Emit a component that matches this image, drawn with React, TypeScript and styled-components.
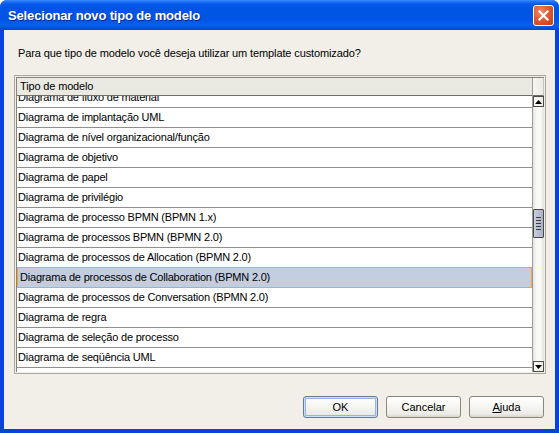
import React from "react";
import styled, { createGlobalStyle } from "styled-components";

const Global = createGlobalStyle`
  html, body { margin: 0; padding: 0; background: #ffffff; }
  body { font-family: "Liberation Sans", Arial, sans-serif; }
  #root { width: 559px; height: 433px; }
`;

const Window = styled.div`
  width: 559px;
  height: 433px;
  box-sizing: border-box;
  display: flex;
  flex-direction: column;
  border-radius: 7px 7px 0 0;
  background: #0842d8;
  overflow: hidden;
`;

const TitleBar = styled.div`
  height: 30px;
  flex: 0 0 30px;
  display: flex;
  align-items: center;
  justify-content: space-between;
  padding: 0 5px 0 8px;
  background: linear-gradient(
    to bottom,
    #3d8dfb 0px,
    #1c6ff6 2px,
    #0859ea 4px,
    #0054e3 9px,
    #0055e6 20px,
    #0a5ef0 25px,
    #0650df 28px,
    #0842d0 30px
  );
`;

const Title = styled.span`
  color: #ffffff;
  font-family: "Liberation Sans", Arial, sans-serif;
  font-weight: bold;
  font-size: 13px;
  letter-spacing: -0.15px;
  text-shadow: 1px 1px 0 #0a2a9a;
  margin-top: 1px;
`;

const CloseButton = styled.div`
  width: 21px;
  height: 21px;
  box-sizing: border-box;
  border: 1px solid #ffffff;
  border-radius: 3px;
  background: radial-gradient(circle at 35% 30%, #f08a66 0%, #e05a32 45%, #c63c14 100%);
  display: flex;
  align-items: center;
  justify-content: center;
  margin-top: 1px;
`;

const Body = styled.div`
  flex: 1;
  margin: 0 4px 4px 4px;
  background: #f1efe8;
  display: flex;
  flex-direction: column;
  padding: 16px 9px 0 10px;
`;

const Prompt = styled.div`
  font-size: 11px;
  letter-spacing: -0.12px;
  line-height: 14px;
  color: #000000;
  padding-left: 4px;
  height: 14px;
  margin-bottom: 15px;
`;

const Frame = styled.div`
  height: 299px;
  box-sizing: border-box;
  border: 1px solid #a9a79d;
  padding: 1px;
  display: flex;
`;

const Inner = styled.div`
  flex: 1;
  display: flex;
  border-left: 1px solid #858479;
  border-top: 1px solid #858479;
  background: #ffffff;
  min-width: 0;
`;

const ListColumn = styled.div`
  flex: 1;
  display: flex;
  flex-direction: column;
  min-width: 0;
`;

const Header = styled.div`
  height: 18px;
  box-sizing: border-box;
  background: #ebeae2;
  border-bottom: 1px solid #716f64;
  font-size: 11px;
  letter-spacing: -0.15px;
  line-height: 17px;
  padding-left: 3px;
  color: #000000;
`;

const Viewport = styled.div`
  flex: 1;
  overflow: hidden;
  background: #ffffff;
`;

const Rows = styled.div`
  margin-top: -8px;
  display: flex;
  flex-direction: column;
`;

const Row = styled.div<{ $selected?: boolean }>`
  height: ${(p) => (p.$selected ? "21px" : "20px")};
  margin-top: ${(p) => (p.$selected ? "-1px" : "0")};
  box-sizing: border-box;
  border-bottom: 1px solid #8f8f8b;
  ${(p) =>
    p.$selected
      ? `border: 1px solid #f2a23e; background: #c2cde2; padding-left: 2px;`
      : `padding-left: 1px;`}
  font-size: 11px;
  letter-spacing: -0.2px;
  line-height: 19px;
  color: #000000;
  white-space: nowrap;
`;

const ScrollBar = styled.div`
  width: 12px;
  box-sizing: border-box;
  border-left: 1px solid #9d9c96;
  display: flex;
  flex-direction: column;
  background: #f1efe8;
`;

const Corner = styled.div`
  height: 18px;
  flex: 0 0 18px;
  box-sizing: border-box;
  background: linear-gradient(to right, #f6f5f0, #ecebe4);
  border-bottom: 1px solid #716f64;
  border-right: 1px solid #c9c7bd;
`;

const ArrowButton = styled.div`
  height: 11px;
  flex: 0 0 11px;
  box-sizing: border-box;
  border: 1px solid #4d4c46;
  background: linear-gradient(to right, #ffffff, #eceae2);
  display: flex;
  align-items: center;
  justify-content: center;
`;

const Track = styled.div`
  flex: 1;
  background: linear-gradient(to right, #e4e3dc 0%, #fbfbf9 35%, #fbfbf9 65%, #e4e3dc 100%);
  display: flex;
  flex-direction: column;
`;

const Thumb = styled.div`
  margin-top: 102px;
  height: 29px;
  box-sizing: border-box;
  border: 1px solid #4a4944;
  border-radius: 1px;
  background: linear-gradient(to right, #c8cedd, #aab3c9);
  display: flex;
  flex-direction: column;
  align-items: center;
  justify-content: center;
  gap: 2px;
`;

const Grip = styled.div`
  width: 5px;
  height: 1px;
  background: #3c3b3e;
`;

const ButtonRow = styled.div`
  display: flex;
  justify-content: flex-end;
  gap: 8px;
  margin-top: 22px;
  padding-right: 2px;
`;

const Button = styled.div<{ $default?: boolean }>`
  width: 75px;
  height: 22px;
  box-sizing: border-box;
  border: 1px solid ${(p) => (p.$default ? "#6d7a8c" : "#8a8778")};
  border-radius: 3px;
  background: linear-gradient(to bottom, #ffffff 0%, #f7f7f4 40%, #ecebe6 85%, #d8d4ca 100%);
  ${(p) =>
    p.$default
      ? `box-shadow: inset 0 0 0 1px #cde0fa, inset 0 0 0 2px #94b4e8;`
      : ``}
  font-size: 11px;
  line-height: 20px;
  text-align: center;
  color: #000000;
`;

const Underline = styled.span`
  text-decoration: underline;
`;

const items = [
  "Diagrama de fluxo de material",
  "Diagrama de implantação UML",
  "Diagrama de nível organizacional/função",
  "Diagrama de objetivo",
  "Diagrama de papel",
  "Diagrama de privilégio",
  "Diagrama de processo BPMN (BPMN 1.x)",
  "Diagrama de processos BPMN (BPMN 2.0)",
  "Diagrama de processos de Allocation (BPMN 2.0)",
  "Diagrama de processos de Collaboration (BPMN 2.0)",
  "Diagrama de processos de Conversation (BPMN 2.0)",
  "Diagrama de regra",
  "Diagrama de seleção de processo",
  "Diagrama de seqüência UML",
  "Diagrama de sistema de informação",
];

export default function App() {
  return (
    <>
      <Global />
      <Window>
        <TitleBar>
          <Title>Selecionar novo tipo de modelo</Title>
          <CloseButton>
            <svg width="11" height="11" viewBox="0 0 11 11">
              <path d="M1.5 1.5 L9.5 9.5 M9.5 1.5 L1.5 9.5" stroke="#ffffff" strokeWidth="2.2" strokeLinecap="square" />
            </svg>
          </CloseButton>
        </TitleBar>
        <Body>
          <Prompt>Para que tipo de modelo você deseja utilizar um template customizado?</Prompt>
          <Frame>
            <Inner>
              <ListColumn>
                <Header>Tipo de modelo</Header>
                <Viewport>
                  <Rows>
                    {items.map((t, i) => (
                      <Row key={t} $selected={i === 9}>
                        {t}
                      </Row>
                    ))}
                  </Rows>
                </Viewport>
              </ListColumn>
              <ScrollBar>
                <Corner />
                <ArrowButton>
                  <svg width="7" height="4" viewBox="0 0 7 4">
                    <path d="M0 4 L3.5 0 L7 4 Z" fill="#000000" />
                  </svg>
                </ArrowButton>
                <Track>
                  <Thumb>
                    <Grip />
                    <Grip />
                    <Grip />
                    <Grip />
                    <Grip />
                  </Thumb>
                </Track>
                <ArrowButton>
                  <svg width="7" height="4" viewBox="0 0 7 4">
                    <path d="M0 0 L7 0 L3.5 4 Z" fill="#000000" />
                  </svg>
                </ArrowButton>
              </ScrollBar>
            </Inner>
          </Frame>
          <ButtonRow>
            <Button $default>OK</Button>
            <Button>Cancelar</Button>
            <Button>
              <Underline>A</Underline>juda
            </Button>
          </ButtonRow>
        </Body>
      </Window>
    </>
  );
}
